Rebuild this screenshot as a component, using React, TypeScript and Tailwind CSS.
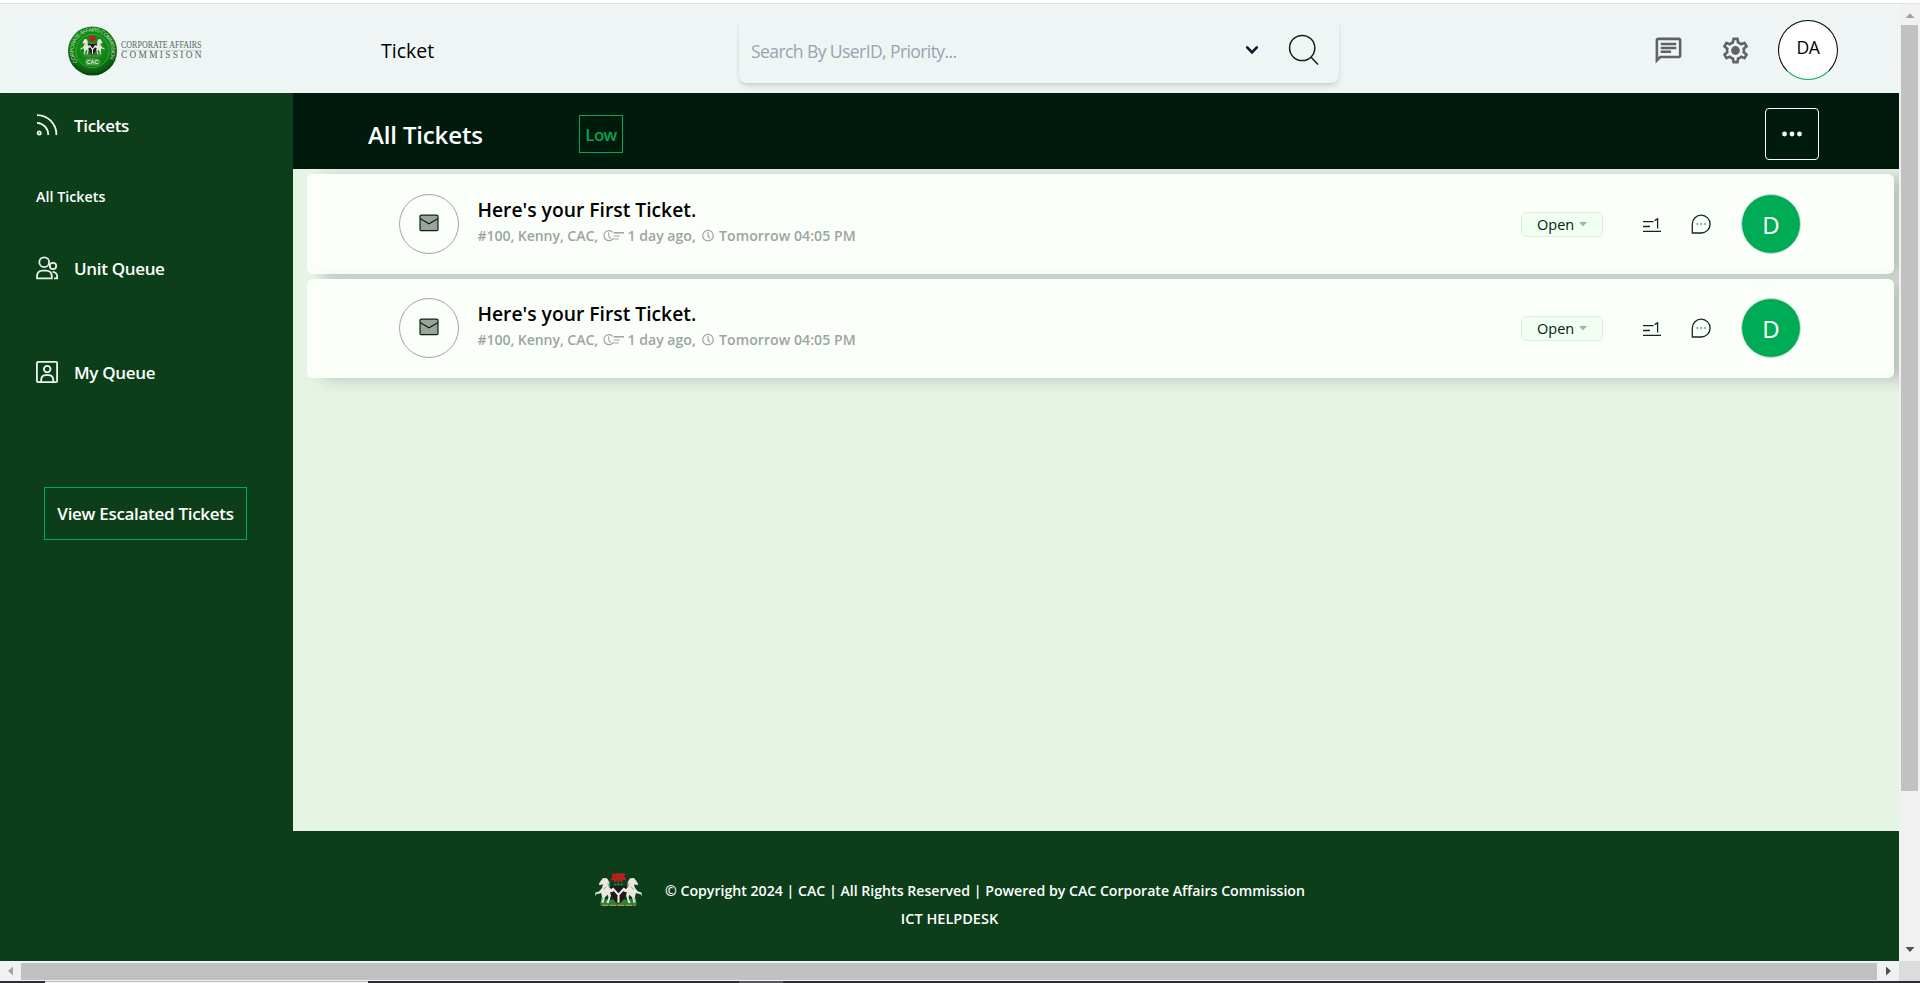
import type { ReactNode } from "react";

function Horse({ flip = false }: { flip?: boolean }) {
  return (
    <g transform={flip ? "translate(49 0) scale(-1 1)" : undefined}>
      <path
        d="M9 5.2 L7.6 7 L5 10.8 L5.4 12.6 L9 11.6 L8 15.5 L5 19 L1.5 20 L1 24 L2.6 21.6 L4.6 21.4 L7 20.6 L8 24 L7.2 30 L9.4 31 L11 25 L13.5 22.5 L14.5 25 L12.5 31 L14.8 31 L17 23 L16 20 L19.5 19 L20 15.5 L17.5 16.5 L15.5 15.5 L15.4 9.4 L13 5.4 Z"
        fill="#e9e8de"
      />
      <path d="M9.5 17 L12 14 M9 25 L7.8 29 M14 10 L14.8 14" stroke="#8d8f84" strokeWidth=".8" fill="none" />
    </g>
  );
}

function CoatOfArms() {
  return (
    <>
      <path d="M6 31 Q10 25 16 28 L24.5 25 L33 28 Q39 25 43 31 L42 34 H7 Z" fill="#27813f" />
      <path d="M8 33.3 H41" stroke="#c98f2c" strokeWidth="1.2" strokeDasharray="6 2" />
      <path d="M16.5 13.5 H32.5 V20 Q31 28 24.5 32 Q18 28 16.5 20 Z" fill="#20191a" />
      <path d="M18.5 15.5 L24.5 22.5 V30.5 M30.5 15.5 L24.5 22.5" stroke="#f2f2ec" strokeWidth="2" fill="none" />
      <Horse />
      <Horse flip />
      <path
        d="M17.5 1 L23 0.2 H28 L32 1 L30 3.4 L33 7.5 L29 7 L28 10.5 L25.5 7.5 L24.5 11 L22.8 7.8 L20 10.5 L20 7 L16 8 L18.5 3.8 Z"
        fill="#b3221f"
      />
      <path d="M20.5 11.8 H28.5" stroke="#2d9150" strokeWidth="1.7" strokeDasharray="2 1" />
    </>
  );
}

function Logo() {
  return (
    <svg width="138" height="52" viewBox="0 0 138 52" className="ml-[66px] mt-[2px] shrink-0 overflow-visible">
      <defs>
        <radialGradient id="seal" cx=".48" cy=".38" r=".62">
          <stop offset="0" stopColor="#149414" />
          <stop offset=".62" stopColor="#0e8512" />
          <stop offset=".88" stopColor="#0a5a10" />
          <stop offset="1" stopColor="#083a10" />
        </radialGradient>
        <path id="ring" d="M10.5 37 A18.9 18.9 0 1 1 40.5 37" />
      </defs>
      <circle cx="25.5" cy="26" r="24.5" fill="url(#seal)" />
      <circle cx="25.5" cy="26" r="16.6" fill="none" stroke="#7fb97f" strokeWidth=".5" />
      <text fill="#c3dfc0" fontFamily="Liberation Sans" fontSize="5.4" textLength="80">
        <textPath href="#ring">CORPORATE AFFAIRS COMMISSION</textPath>
      </text>
      <svg x="13" y="11" width="25" height="21" viewBox="0 0 49 35" preserveAspectRatio="none">
        <CoatOfArms />
      </svg>
      <rect x="18.5" y="34" width="14" height="6" rx="3" fill="#2c8a2c" stroke="#a8d2a5" strokeWidth=".5" />
      <text x="25.5" y="39" textAnchor="middle" fill="#eaf5e8" fontFamily="Liberation Sans" fontSize="5.4" fontWeight="700">
        CAC
      </text>
      <text x="54" y="23.4" fill="#52665b" fontFamily="Liberation Serif" fontSize="9.4" textLength="80.5" lengthAdjust="spacingAndGlyphs">
        CORPORATE AFFAIRS
      </text>
      <path d="M54 25.4 H134.5" stroke="#b7c2bc" strokeWidth=".7" />
      <text x="54" y="33.2" fill="#52665b" fontFamily="Liberation Serif" fontSize="9.4" textLength="80.5">
        COMMISSION
      </text>
    </svg>
  );
}

function RssIcon() {
  return (
    <svg width="22" height="22" viewBox="0 0 22 22" fill="none" stroke="#f4faf5" strokeWidth="1.8">
      <path d="M1 1.2 A19.3 19.3 0 0 1 20.4 21 M1 8.8 A12 12 0 0 1 12.3 21" />
      <circle cx="3.2" cy="19" r="1.6" />
    </svg>
  );
}

function UsersIcon() {
  return (
    <svg width="22" height="24" viewBox="0 0 22 24" fill="none" stroke="#e6f1e8" strokeWidth="1.8">
      <circle cx="8.2" cy="6.2" r="4.9" />
      <circle cx="17" cy="10" r="3.2" />
      <path d="M1 22.3 V20.5 Q1 14.6 6.8 14.6 H10 Q15.8 14.6 15.8 20.5 V22.3 Z" />
      <path d="M16.5 15.8 Q21.1 16.2 21.1 20.5 V22.3 H18" />
    </svg>
  );
}

function PersonBoxIcon() {
  return (
    <svg width="22" height="22" viewBox="0 0 22 22" fill="none" stroke="#f0f7f1" strokeWidth="1.8">
      <rect x=".9" y=".9" width="20.2" height="20.2" rx="1.2" />
      <circle cx="11.2" cy="8.1" r="3.3" />
      <path d="M5.2 21 V19 Q5.2 14.2 10 14.2 H12.4 Q17.2 14.2 17.2 19 V21" />
    </svg>
  );
}

function NavRow({ icon, children }: { icon: ReactNode; children: ReactNode }) {
  return (
    <div className="flex h-6 items-center pl-9">
      <span className="flex w-[38px] items-center">{icon}</span>
      <span className="pt-[2px] text-[17px] leading-6 font-semibold tracking-[-0.33px]">{children}</span>
    </div>
  );
}

function TicketRow({ size }: { size: string }) {
  return (
    <article
      className={`flex ${size} items-center rounded-[6px] bg-[#fbfffa] pl-[92px] shadow-[15px_2px_15px_rgba(0,0,0,0.19)]`}
    >
      <div className="flex size-[60px] shrink-0 items-center justify-center rounded-full border border-[#9ba89c]">
        <svg width="20" height="18" viewBox="0 0 20 18" className="-mt-0.5">
          <rect x="1" y="1.2" width="18" height="15.4" rx="1.2" fill="#98a598" stroke="#0b2415" strokeWidth="1.2" />
          <path d="M1 4.6 L10 9.8 L19 4.6" fill="none" stroke="#0b2415" strokeWidth="1.2" />
        </svg>
      </div>
      <div className="ml-[18.5px] w-[1044.5px] shrink-0 pb-[2px]">
        <h2 className="text-[19.3px] leading-[26px] font-semibold text-black">Here's your First Ticket.</h2>
        <p className="flex items-center text-[14.1px] leading-[26px] font-semibold text-[#9aa69a]">
          <span className="w-[125.5px] tracking-[-0.08px]">#100, Kenny, CAC,</span>
          <svg width="21" height="14" viewBox="0 0 21 14" fill="none" stroke="#9aa69a" strokeWidth="1.1">
            <path d="M9.8 3.4 A5 5 0 1 0 9.8 9.8" />
            <path d="M5.7 3.6 V7 L7.8 9.6" />
            <path d="M10.8 3.8 H21" strokeWidth="1.5" />
            <path d="M10.8 7 H17 M9.6 10 H16" />
          </svg>
          <span className="ml-[3.5px] w-[74.5px]">1 day ago,</span>
          <svg width="12" height="14" viewBox="0 0 12 14" fill="none" stroke="#9aa69a" strokeWidth="1.2">
            <circle cx="6" cy="6.6" r="5.3" />
            <path d="M6 3.2 V7 L8 9.4" />
          </svg>
          <span className="ml-[5px] tracking-[0.05px]">Tomorrow 04:05 PM</span>
        </p>
      </div>
      <button className="-ml-px flex h-[25px] w-[82px] shrink-0 items-center rounded-[5px] border border-[#e2e8e6] bg-[#f1fff2] pl-[15px] text-[14.5px] leading-[22px] text-[#001b0d]">
        <span className="pt-px">Open</span>
        <svg width="8" height="5" viewBox="0 0 8 5" className="ml-[5px]">
          <path d="M0 .1 H8 L4 4.4 Z" fill="#a3b3a5" />
        </svg>
      </button>
      <svg width="18" height="16" viewBox="0 0 18 16" className="ml-[40px] mt-[2px] shrink-0" fill="none" stroke="#10281a" strokeWidth="1.3">
        <path d="M0 4.6 H10.6 M0 9.5 H7 M0 14.4 H18" />
        <path d="M11.6 3.6 L14.6 1.9 V11.5" />
      </svg>
      <svg width="20" height="20" viewBox="0 0 20 20" className="ml-[30px] shrink-0" fill="none" stroke="#10281a" strokeWidth="1.3">
        <path d="M1.3 19 V10 A8.9 8.9 0 1 1 10.2 19 Z" />
        <path d="M5.6 10 H7 M9.5 10 H10.9 M13.4 10 H14.8" stroke="#5a6c60" strokeWidth="1.4" />
      </svg>
      <div className="ml-[30px] flex size-[60px] shrink-0 items-center justify-center rounded-full border border-[#d3ded5] bg-[#00ab55] text-[24px] leading-none text-white">
        <span className="pt-px">D</span>
      </div>
    </article>
  );
}

function Arrow({ d, fill }: { d: string; fill: string }) {
  return (
    <svg width="10" height="10" viewBox="0 0 10 10" className="shrink-0">
      <path d={d} fill={fill} />
    </svg>
  );
}

export default function App() {
  return (
    <div className="flex h-[983px] w-[1920px] flex-col overflow-hidden bg-white font-['Open_Sans','Noto_Sans',sans-serif]">
      <div className="h-1 shrink-0 border-b border-[#dfe3df] bg-white" />
      <div className="flex h-[957px] shrink-0">
        <div className="flex w-[1899px] flex-col">
          <header className="flex h-[89px] shrink-0 items-center border-x border-t border-[#ecfdec] bg-[#eff5f5] pt-[2px]">
            <Logo />
            <h1 className="ml-[176px] w-[358px] shrink-0 pt-[2px] text-[19.5px] leading-7 text-black">Ticket</h1>
            <div className="flex h-[66px] w-[600px] shrink-0 items-center rounded-[8px] bg-[#eff5f5] pl-[12px] shadow-[0_4px_6px_-1px_rgba(0,0,0,0.12),0_2px_4px_-2px_rgba(0,0,0,0.1)]">
              <span className="w-[494px] pt-[2px] text-[17.6px] leading-7 tracking-[-0.62px] text-[#9ca3af]">
                Search By UserID, Priority...
              </span>
              <svg width="14" height="10" viewBox="0 0 14 10" fill="none" stroke="#111a2b" strokeWidth="2.7" strokeLinecap="round">
                <path d="M2.2 2.4 L7 7.4 L11.8 2.4" />
              </svg>
              <svg width="32" height="32" viewBox="0 0 32 32" className="ml-[29px]" fill="none" stroke="#0c2416" strokeWidth="1.5">
                <circle cx="14.2" cy="14" r="12.6" />
                <path d="M22.8 23 L30 30.5" />
              </svg>
            </div>
            <svg width="31" height="31" viewBox="0 0 24 24" className="ml-[314px] shrink-0" fill="#5f6368">
              <path d="M4 4h16v12H5.17L4 17.17V4m0-2c-1.1 0-1.99.9-1.99 2L2 22l4-4h14c1.1 0 2-.9 2-2V4c0-1.1-.9-2-2-2H4zm2 10h8v2H6v-2zm0-3h12v2H6V9zm0-3h12v2H6V6z" />
            </svg>
            <svg width="31" height="31" viewBox="0 0 24 24" className="ml-[36px] shrink-0" fill="#5f6368">
              <path d="M19.43 12.98c.04-.32.07-.64.07-.98s-.03-.66-.07-.98l2.11-1.65c.19-.15.24-.42.12-.64l-2-3.46c-.09-.16-.26-.25-.44-.25-.06 0-.12.01-.17.03l-2.49 1c-.52-.4-1.08-.73-1.69-.98l-.38-2.65C14.46 2.18 14.25 2 14 2h-4c-.25 0-.46.18-.49.42l-.38 2.65c-.61.25-1.17.59-1.69.98l-2.49-1c-.06-.02-.12-.03-.18-.03-.17 0-.34.09-.43.25l-2 3.46c-.13.22-.07.49.12.64l2.11 1.65c-.04.32-.07.65-.07.98s.03.66.07.98l-2.11 1.65c-.19.15-.24.42-.12.64l2 3.46c.09.16.26.25.44.25.06 0 .12-.01.17-.03l2.49-1c.52.4 1.08.73 1.69.98l.38 2.65c.03.24.24.42.49.42h4c.25 0 .46-.18.49-.42l.38-2.65c.61-.25 1.17-.59 1.69-.98l2.49 1c.06.02.12.03.18.03.17 0 .34-.09.43-.25l2-3.46c.12-.22.07-.49-.12-.64l-2.11-1.65zm-1.98-1.71c.04.31.05.52.05.73 0 .21-.02.43-.05.73l-.14 1.13.89.7 1.08.84-.7 1.21-1.27-.51-1.04-.42-.9.68c-.43.32-.84.56-1.25.73l-1.06.43-.16 1.13-.2 1.35h-1.4l-.19-1.35-.16-1.13-1.06-.43c-.43-.18-.83-.41-1.23-.71l-.91-.7-1.06.43-1.27.51-.7-1.21 1.08-.84.89-.7-.14-1.13c-.03-.31-.05-.54-.05-.74s.02-.43.05-.73l.14-1.13-.89-.7-1.08-.84.7-1.21 1.27.51 1.04.42.9-.68c.43-.32.84-.56 1.25-.73l1.06-.43.16-1.13.2-1.35h1.39l.19 1.35.16 1.13 1.06.43c.43.18.83.41 1.23.71l.91.7 1.06-.43 1.27-.51.7 1.21-1.07.85-.89.7.14 1.13z" />
              <circle cx="12" cy="12" r="3.4" />
            </svg>
            <div className="ml-[27px] flex size-[60px] shrink-0 items-center justify-center rounded-full border border-black border-b-[#00ab55] bg-white pb-[6px] text-[17.6px] leading-6 tracking-[-0.5px] text-black">
              DA
            </div>
          </header>

          <div className="flex h-[738px] shrink-0">
            <aside className="w-[293px] shrink-0 bg-[#0c3e1a] pt-5 text-white">
              <NavRow icon={<RssIcon />}>Tickets</NavRow>
              <div className="mt-12 pl-9 text-[14.3px] leading-6 font-semibold">All Tickets</div>
              <div className="mt-[47px]">
                <NavRow icon={<UsersIcon />}>Unit Queue</NavRow>
              </div>
              <div className="mt-20">
                <NavRow icon={<PersonBoxIcon />}>My Queue</NavRow>
              </div>
              <button className="mt-[103px] ml-[44px] h-[53px] w-[203px] border border-[#00ab55] text-[17px] leading-6 font-semibold tracking-[-0.3px] whitespace-nowrap">
                View Escalated Tickets
              </button>
            </aside>

            <main className="flex w-[1606px] flex-col overflow-hidden bg-[#e6f4e6]">
              <div className="flex h-[76px] shrink-0 items-center bg-[#001b0d] pt-[6px]">
                <h2 className="ml-[75px] w-[211px] pt-[2px] text-[24px] leading-8 font-semibold tracking-[-0.15px] text-white">All Tickets</h2>
                <span className="flex h-[38px] w-[44px] items-center justify-center border border-[#00ab55] pt-px font-['Noto_Sans'] text-[17px] leading-6 font-medium tracking-[-0.5px] text-[#00ab55]">
                  Low
                </span>
                <button className="ml-[1142px] flex h-[52px] w-[54px] items-center justify-center rounded-[4px] border border-white">
                  <svg width="22" height="6" viewBox="0 0 22 6" fill="#ffffff">
                    <circle cx="3.5" cy="3" r="2.4" />
                    <circle cx="11" cy="3" r="2.4" />
                    <circle cx="18.5" cy="3" r="2.4" />
                  </svg>
                </button>
              </div>
              <div className="flex flex-col gap-[5px] overflow-hidden pt-[5px] pr-[5px] pb-10 pl-[14px]">
                <TicketRow size="h-[100px]" />
                <TicketRow size="h-[99px] pb-px" />
              </div>
            </main>
          </div>

          <footer className="flex h-[130px] shrink-0 flex-col items-center bg-[#0c3e1a] pt-[42px] text-[14.15px] font-semibold text-white">
            <div className="flex h-[34px] items-center">
              <svg width="49" height="34" viewBox="0 0 49 35" preserveAspectRatio="none">
                <CoatOfArms />
              </svg>
              <p className="ml-[22px] pt-[2px] leading-7">
                © Copyright 2024 | CAC | All Rights Reserved | Powered by CAC Corporate Affairs Commission
              </p>
            </div>
            <p className="-mt-[2px] text-[14.5px] leading-7 font-semibold">ICT HELPDESK</p>
          </footer>
        </div>

        <div className="flex w-[21px] flex-col items-center bg-[#f1f1f1] pt-[6px] pb-[7px]">
          <Arrow d="M.5 8 L5 3.2 L9.5 8 Z" fill="#a3a3a3" />
          <div className="mt-[5px] h-[766px] w-[17px] bg-[#c1c1c1]" />
          <div className="mt-auto flex">
            <Arrow d="M.5 3 L5 8 L9.5 3 Z" fill="#505050" />
          </div>
        </div>
      </div>

      <div className="flex h-5 shrink-0">
        <div className="flex w-[1899px] items-center bg-[#f1f1f1]">
          <span className="flex w-[21px] pl-[6px]">
            <Arrow d="M7 .5 L2 5 L7 9.5 Z" fill="#a3a3a3" />
          </span>
          <div className="h-[17px] w-[1856px] bg-[#c1c1c1]" />
          <span className="flex pl-[7px]">
            <Arrow d="M2 .5 L7 5 L2 9.5 Z" fill="#505050" />
          </span>
        </div>
        <div className="w-[21px] bg-[#dcdcdc]" />
      </div>
      <div className="flex h-[2px] shrink-0 bg-[#2e2d31]">
        <div className="ml-[45px] h-[2px] w-[323px] border-t border-[#bdbdbd] bg-[#f3f3f3]" />
        <div className="ml-[371px] h-[2px] w-[44px] bg-[#58585c]" />
      </div>
    </div>
  );
}
